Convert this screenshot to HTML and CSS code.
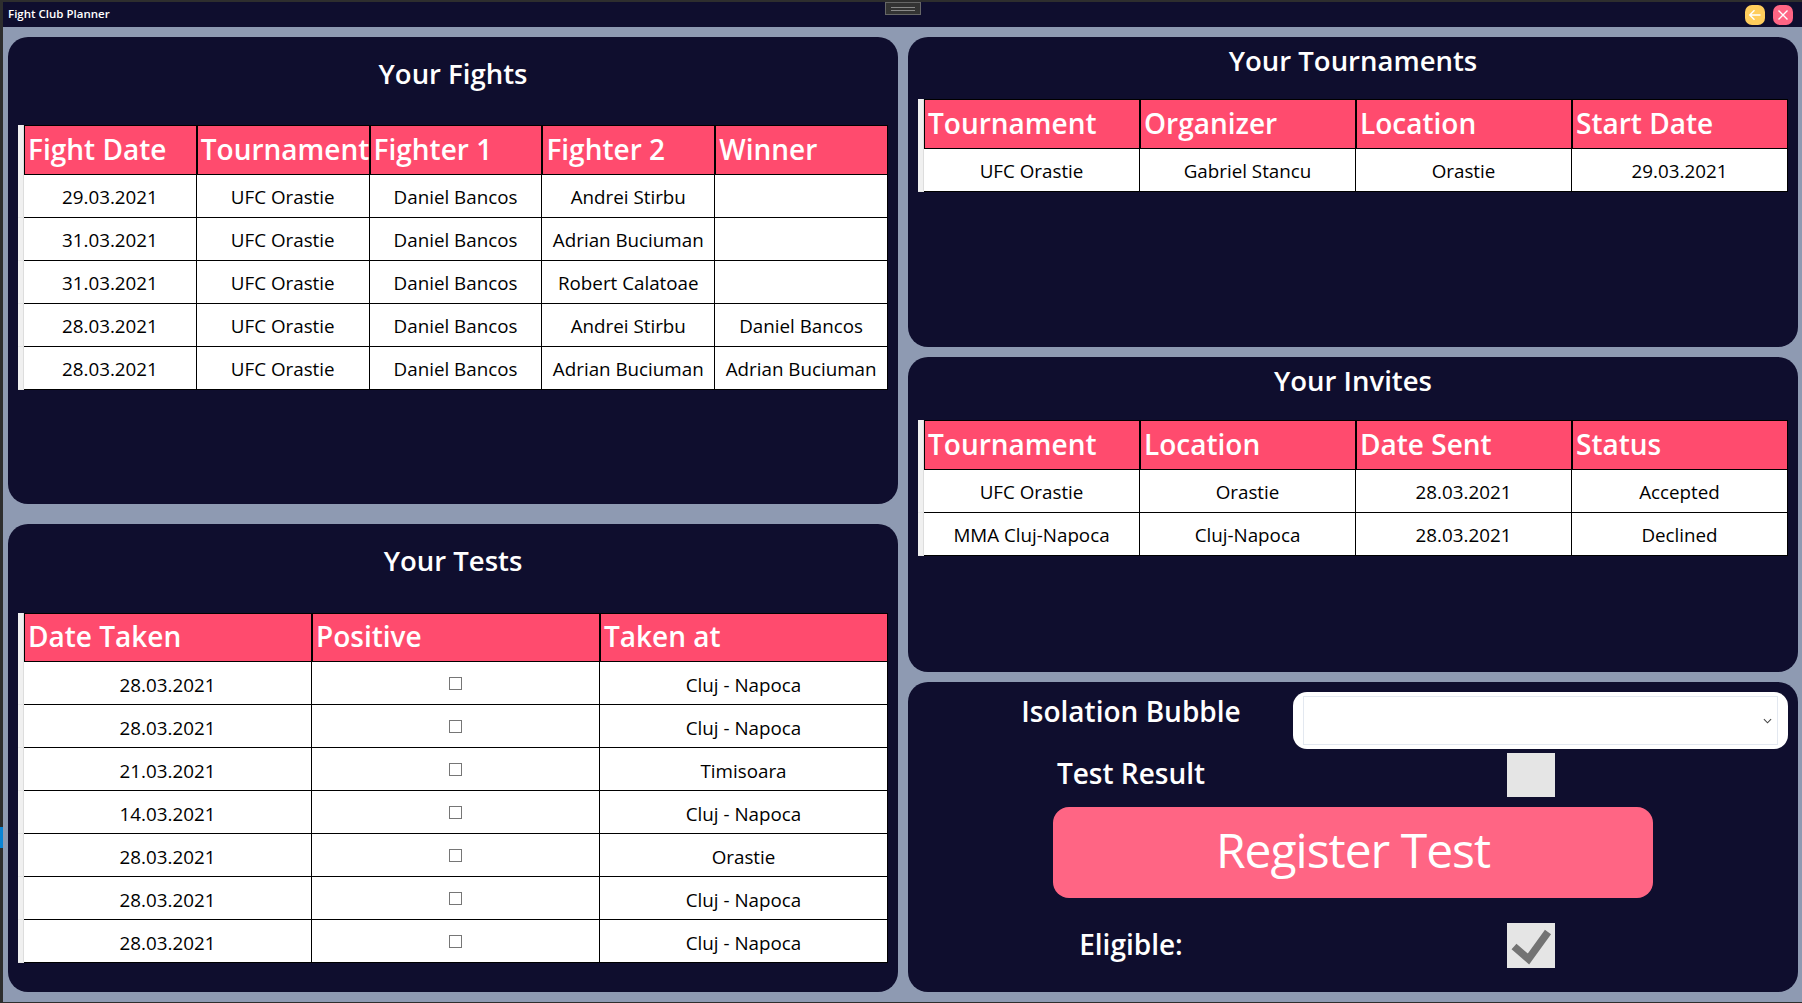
FILE: index.html
```html
<!DOCTYPE html>
<html lang="en">
<head>
  <meta charset="UTF-8">
  <title>Fight Club Planner</title>
  <link rel="stylesheet" href="styles.css">
</head>
<body>
  <div class="task-blue"></div>
  <div class="window">
    <header class="titlebar">
      <span class="app-name">Fight Club Planner</span>
      <div class="grip"><span></span></div>
      <div class="win-buttons">
        <button class="win-btn back" type="button" aria-label="Back">
          <svg viewBox="0 0 20 20" width="20" height="20"><path d="M15.5 10H5M9.5 5.2 4.7 10l4.8 4.8" fill="none" stroke="#fff" stroke-width="1.4"/></svg>
        </button>
        <button class="win-btn close" type="button" aria-label="Close">
          <svg viewBox="0 0 20 20" width="20" height="20"><path d="M5.5 5.500l9 9M14.500 5.500l-9 9" fill="none" stroke="#fff" stroke-width="1.4"/></svg>
        </button>
      </div>
    </header>

    <main class="content">
      <div class="col">
        <section class="panel fights">
          <h2 class="title tall">Your Fights</h2>
          <table class="grid">
            <thead>
              <tr><th class="gut"></th><th>Fight Date</th><th>Tournament</th><th>Fighter 1</th><th>Fighter 2</th><th>Winner</th></tr>
            </thead>
            <tbody>
              <tr><td class="gut"></td><td>29.03.2021</td><td>UFC Orastie</td><td>Daniel Bancos</td><td>Andrei Stirbu</td><td></td></tr>
              <tr><td class="gut"></td><td>31.03.2021</td><td>UFC Orastie</td><td>Daniel Bancos</td><td>Adrian Buciuman</td><td></td></tr>
              <tr><td class="gut"></td><td>31.03.2021</td><td>UFC Orastie</td><td>Daniel Bancos</td><td>Robert Calatoae</td><td></td></tr>
              <tr><td class="gut"></td><td>28.03.2021</td><td>UFC Orastie</td><td>Daniel Bancos</td><td>Andrei Stirbu</td><td>Daniel Bancos</td></tr>
              <tr><td class="gut"></td><td>28.03.2021</td><td>UFC Orastie</td><td>Daniel Bancos</td><td>Adrian Buciuman</td><td>Adrian Buciuman</td></tr>
            </tbody>
          </table>
        </section>

        <section class="panel tests">
          <h2 class="title tall">Your Tests</h2>
          <table class="grid">
            <thead>
              <tr><th class="gut"></th><th>Date Taken</th><th>Positive</th><th>Taken at</th></tr>
            </thead>
            <tbody>
              <tr><td class="gut"></td><td>28.03.2021</td><td><input class="mini-check" type="checkbox"></td><td>Cluj - Napoca</td></tr>
              <tr><td class="gut"></td><td>28.03.2021</td><td><input class="mini-check" type="checkbox"></td><td>Cluj - Napoca</td></tr>
              <tr><td class="gut"></td><td>21.03.2021</td><td><input class="mini-check" type="checkbox"></td><td>Timisoara</td></tr>
              <tr><td class="gut"></td><td>14.03.2021</td><td><input class="mini-check" type="checkbox"></td><td>Cluj - Napoca</td></tr>
              <tr><td class="gut"></td><td>28.03.2021</td><td><input class="mini-check" type="checkbox"></td><td>Orastie</td></tr>
              <tr><td class="gut"></td><td>28.03.2021</td><td><input class="mini-check" type="checkbox"></td><td>Cluj - Napoca</td></tr>
              <tr><td class="gut"></td><td>28.03.2021</td><td><input class="mini-check" type="checkbox"></td><td>Cluj - Napoca</td></tr>
            </tbody>
          </table>
        </section>
      </div>

      <div class="col">
        <section class="panel tournaments">
          <h2 class="title short">Your Tournaments</h2>
          <table class="grid">
            <thead>
              <tr><th class="gut"></th><th>Tournament</th><th>Organizer</th><th>Location</th><th>Start Date</th></tr>
            </thead>
            <tbody>
              <tr><td class="gut"></td><td>UFC Orastie</td><td>Gabriel Stancu</td><td>Orastie</td><td>29.03.2021</td></tr>
            </tbody>
          </table>
        </section>

        <section class="panel invites">
          <h2 class="title short">Your Invites</h2>
          <table class="grid">
            <thead>
              <tr><th class="gut"></th><th>Tournament</th><th>Location</th><th>Date Sent</th><th>Status</th></tr>
            </thead>
            <tbody>
              <tr><td class="gut"></td><td>UFC Orastie</td><td>Orastie</td><td>28.03.2021</td><td>Accepted</td></tr>
              <tr><td class="gut"></td><td>MMA Cluj-Napoca</td><td>Cluj-Napoca</td><td>28.03.2021</td><td>Declined</td></tr>
            </tbody>
          </table>
        </section>

        <section class="panel register">
          <div class="form-row bubble-row">
            <label class="form-label">Isolation Bubble</label>
            <div class="select-wrap">
              <select class="bubble-select"></select>
              <svg class="chevron" viewBox="0 0 10 6" width="9" height="6"><path d="M1 1l4 4 4-4" fill="none" stroke="#444" stroke-width="1.2"/></svg>
            </div>
          </div>
          <div class="form-row result-row">
            <label class="form-label">Test Result</label>
            <span class="big-check"></span>
          </div>
          <button class="register-btn" type="button">Register Test</button>
          <div class="form-row eligible-row">
            <label class="form-label">Eligible:</label>
            <span class="big-check">
              <svg viewBox="0 0 48 45" width="48" height="45"><path d="M7 23.500 21.500 36 41 9" fill="none" stroke="#737373" stroke-width="7.5"/></svg>
            </span>
          </div>
        </section>
      </div>
    </main>
  </div>
</body>
</html>
```

FILE: styles.css
```css
* { box-sizing: border-box; }
html, body { margin: 0; height: 100%; }
body { background: #2e2e2e; font-family: "Open Sans", "Noto Sans", sans-serif; padding: 2px 0 1px 3px; overflow: hidden; }

.task-blue { position: absolute; left: 0; top: 827px; width: 3px; height: 21px; background: #0a84d6; }

.window { display: flex; flex-direction: column; height: 1000px; background: #8e9ab2; }

.titlebar { display: flex; align-items: center; justify-content: space-between; position: relative; height: 25px; flex: none; background: #0f0e2e; padding: 0 9px 0 5px; }
.app-name { color: #fff; font-size: 11.500px; font-weight: 600; padding-bottom: 2px; }
.grip { position: absolute; left: 882px; top: 0; width: 36px; height: 13px; background: #333; border: 1px solid #666; display: flex; align-items: center; justify-content: center; }
.grip span { display: block; width: 24px; height: 4px; border-top: 1px solid #888; border-bottom: 1px solid #888; }
.win-buttons { display: flex; gap: 8px; }
.win-btn { width: 20px; height: 20px; padding: 0; border: none; border-radius: 7px; display: block; }
.win-btn svg { display: block; }
.back { background: #ffcd5c; }
.close { background: #ff6584; }

.content { display: flex; gap: 10px; padding: 10px 4px 0 5px; }
.col { width: 890px; display: flex; flex-direction: column; }

.panel { background: #0f0e2e; border-radius: 20px; padding: 0 10px; }
.fights { height: 467px; margin-bottom: 20px; }
.tests { height: 468px; }
.tournaments { height: 310px; margin-bottom: 10px; }
.invites { height: 315px; margin-bottom: 10px; }
.register { height: 310px; padding: 10px 10px 0 0; }

.title { margin: 0; color: #fff; font-size: 27.500px; font-weight: 600; text-align: center; }
.title.tall { height: 88px; line-height: 74px; }
.title.short { height: 62px; line-height: 48px; }
.tests .title.tall { height: 89px; }
.invites .title.short { height: 63px; }

.grid { width: 870px; table-layout: fixed; border-collapse: separate; border-spacing: 0; background: #fff; }
.grid th { height: 50px; padding: 0 0 3px 3px; border: 1px solid #000; background: #ff4b6e; color: #fff; font-size: 28px; font-weight: 600; text-align: left; white-space: nowrap; overflow: hidden; }
.grid td { height: 43px; padding: 1px 0 0; border-right: 1px solid #000; border-bottom: 1px solid #000; color: #000; font-size: 18.800px; text-align: center; white-space: nowrap; }
.grid .gut { width: 6px; padding: 0; border: none; background: #f0f0f0; border-right: 1px solid #ddd; }
.grid td.gut { border-bottom: 1px solid #e6e6e6; }
.tests .grid th { height: 49px; }
.tests .grid td { padding-top: 3px; }
.tests .grid td.gut { padding: 0; }

.mini-check { appearance: none; display: block; width: 13px; height: 13px; margin: -3px auto 0; border: 1px solid #767676; background: #fff; }

.form-row { display: grid; grid-template-columns: 385px 1fr; }
.form-label { padding-left: 61px; color: #fff; font-size: 28px; font-weight: 600; text-align: center; line-height: 38px; }

.bubble-row { height: 57px; }
.select-wrap { position: relative; height: 57px; padding: 4px 10px; background: #fff; border-radius: 14px; }
.bubble-select { appearance: none; display: block; width: 100%; height: 49px; background: #fff; border: 1px solid #e3e8f0; border-radius: 0; }
.chevron { position: absolute; right: 16px; top: 26px; }

.result-row { margin-top: 4px; height: 44px; }
.result-row .form-label { padding-top: 1px; }
.big-check { display: block; width: 48px; height: 44px; margin-left: 214px; background: #e5e5e5; overflow: hidden; }
.big-check svg { display: block; }

.register-btn { display: block; width: 600px; height: 91px; margin: 10px 0 0 145px; padding: 0 0 6px; border: none; border-radius: 16px; background: #ff6584; color: #fff; font-family: inherit; font-size: 48px; font-weight: 400; letter-spacing: -1px; }

.eligible-row { margin-top: 25px; height: 45px; }
.eligible-row .big-check { height: 45px; }
.eligible-row .form-label { padding-top: 2px; }
```
